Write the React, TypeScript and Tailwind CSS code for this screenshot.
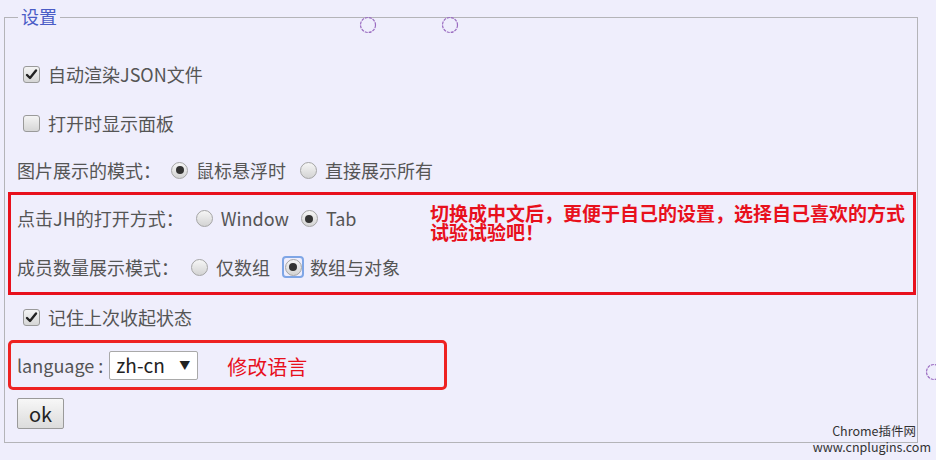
import type { ReactNode } from "react";

const font = { fontFamily: '"Noto Sans CJK SC", "Noto Sans", sans-serif' };

function Checkbox({ checked }: { checked?: boolean }) {
  return (
    <span className="mr-[8px] inline-flex h-[17px] w-[17px] items-center justify-center rounded-[3px] border border-[#9a9a9a] bg-gradient-to-b from-[#f4f4f4] to-[#d6d6d6]">
      {checked && (
        <svg width="13" height="13" viewBox="0 0 13 13">
          <path d="M2 7 L5 10 L11 2.5" fill="none" stroke="#222" strokeWidth="2.4" strokeLinecap="round" strokeLinejoin="round" />
        </svg>
      )}
    </span>
  );
}

function Radio({ checked, focused }: { checked?: boolean; focused?: boolean }) {
  return (
    <span
      className={
        focused
          ? "mr-[6px] inline-flex h-[22px] w-[22px] items-center justify-center rounded-[4px] border-2 border-[#7fa6e6]"
          : "mr-[8px] inline-flex"
      }
    >
      <span className="inline-flex h-[17px] w-[17px] items-center justify-center rounded-full border border-[#a5a5a5] bg-gradient-to-b from-[#f6f6f6] to-[#d3d3d3]">
        {checked && <span className="h-[8px] w-[8px] rounded-full bg-[#333]" />}
      </span>
    </span>
  );
}

function Dotted({ className }: { className: string }) {
  return (
    <svg className={className} width="18" height="18" viewBox="0 0 18 18">
      <circle cx="9" cy="9" r="7.5" fill="none" stroke="#9a6bc0" strokeWidth="1.2" strokeDasharray="3 1" />
    </svg>
  );
}

function Row({ h, pl, children }: { h: string; pl: string; children: ReactNode }) {
  return <div className={`flex items-center ${h} ${pl}`}>{children}</div>;
}

export default function App() {
  return (
    <div className="relative h-[460px] w-[936px] overflow-hidden bg-[#efeefc] text-[18px] text-[#555]" style={font}>
      <div className="relative ml-[4px] mt-[17px] w-[914px] border border-[#b4b4b8] pb-[13px] pt-[32px]">
        <span className="absolute -top-[14px] left-[13px] bg-[#efeefc] px-[3px] leading-[24px] text-[#4a5cc6]">设置</span>

        <Row h="h-[49px]" pl="pl-[18px]">
          <Checkbox checked />
          自动渲染JSON文件
        </Row>
        <Row h="h-[49px]" pl="pl-[18px]">
          <Checkbox />
          打开时显示面板
        </Row>
        <Row h="h-[44px]" pl="pl-[12px]">
          <span className="mr-[10px]">图片展示的模式：</span>
          <Radio checked />
          <span className="mr-[14px]">鼠标悬浮时</span>
          <Radio />
          直接展示所有
        </Row>

        <div className="ml-[3px] mr-[1px] flex border-[3px] border-[#e8101c]">
          <div className="w-[410px]">
            <Row h="h-[47px]" pl="pl-[6px]">
              <span className="mr-[12px]">点击JH的打开方式：</span>
              <Radio />
              <span className="mr-[12px]">Window</span>
              <Radio checked />
              Tab
            </Row>
            <Row h="h-[50px]" pl="pl-[6px]">
              <span className="mr-[12px]">成员数量展示模式：</span>
              <Radio />
              <span className="mr-[12px]">仅数组</span>
              <Radio checked focused />
              数组与对象
            </Row>
          </div>
          <p className="ml-[9px] pt-[8px] text-[19px] font-bold leading-[19px] text-[#e8101c]">
            切换成中文后，更便于自己的设置，选择自己喜欢的方式
            <br />
            试验试验吧！
          </p>
        </div>

        <Row h="h-[44px]" pl="pl-[18px]">
          <Checkbox checked />
          记住上次收起状态
        </Row>

        <div className="ml-[3px] mt-[1px] flex h-[50px] w-[439px] items-center rounded-[5px] border-[3px] border-[#ee2222] pl-[6px]">
          <span className="mr-[6px]">language :</span>
          <span className="flex h-[29px] w-[89px] items-center justify-between rounded-[2px] border border-[#a9a9a9] bg-white pl-[6px] pr-[7px] text-[19px] text-[#222]">
            zh-cn
            <span className="text-[11px]">▼</span>
          </span>
          <span className="ml-[29px] mt-[4px] text-[20px] text-[#e8101c]">修改语言</span>
        </div>

        <button className="ml-[12px] mt-[8px] flex h-[31px] w-[47px] items-center justify-center rounded-[2px] border border-[#9a9a9a] bg-gradient-to-b from-[#f7f7f7] to-[#dcdcdc] text-[20px] text-[#222]">
          ok
        </button>
      </div>

      <Dotted className="absolute left-[359px] top-[16px]" />
      <Dotted className="absolute left-[441px] top-[16px]" />
      <Dotted className="absolute left-[925px] top-[363px]" />

      <div className="absolute right-[5px] top-[423px] text-right text-[12.5px] leading-[16px] text-[#333]">
        <div className="pr-[15px]">Chrome插件网</div>
        <div>www.cnplugins.com</div>
      </div>
    </div>
  );
}
